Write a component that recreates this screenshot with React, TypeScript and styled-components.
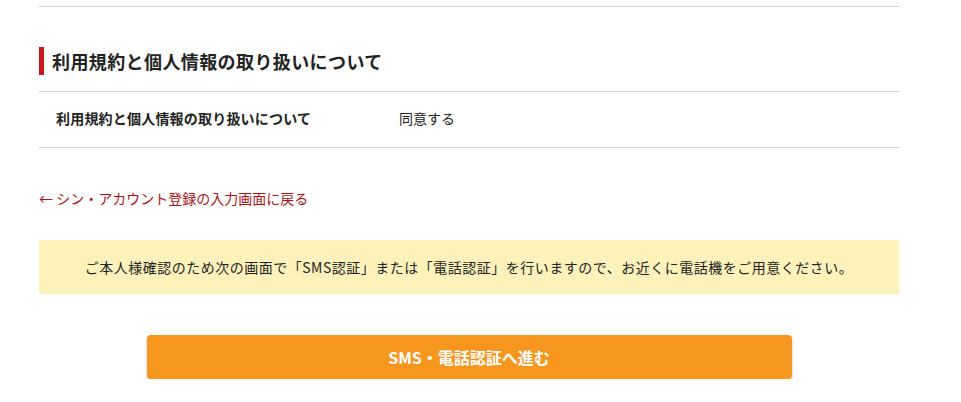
import React from "react";
import styled, { createGlobalStyle } from "styled-components";

const Global = createGlobalStyle`
  body {
    margin: 0;
    background: #fff;
    font-family: "Noto Sans CJK JP", "Liberation Sans", sans-serif;
    color: #222;
  }
`;

const Page = styled.div`
  width: 860px;
  margin-left: 39px;
  padding-top: 6px;
`;

const TopRule = styled.div`
  border-top: 1px solid #d2d2d2;
`;

const Heading = styled.h2`
  margin: 40px 0 0;
  border-left: 5px solid #c8161d;
  padding-left: 8px;
  font-size: 18px;
  font-weight: bold;
  line-height: 28px;
  letter-spacing: 0.4px;
  color: #222;
`;

const Table = styled.div`
  margin-top: 16px;
  border-top: 1px solid #d2d2d2;
`;

const Row = styled.div`
  display: grid;
  grid-template-columns: 343px 1fr;
  align-items: center;
  height: 56px;
  box-sizing: border-box;
  padding: 0 0 3px 17px;
  border-bottom: 1px solid #d2d2d2;
  font-size: 14px;
`;

const Label = styled.div`
  font-weight: bold;
  color: #222;
  letter-spacing: 0.2px;
`;

const Value = styled.div`
  color: #222;
`;

const BackLink = styled.a`
  display: block;
  margin-top: 40px;
  font-size: 14px;
  line-height: 20px;
  color: #a8151b;
  text-decoration: none;
`;

const Notice = styled.div`
  margin-top: 32px;
  height: 54px;
  background: #fff1ba;
  display: flex;
  align-items: center;
  justify-content: center;
  font-size: 14px;
  letter-spacing: 0.5px;
  color: #222;
`;

const Button = styled.button`
  display: block;
  margin: 41px auto 0;
  width: 645px;
  height: 44px;
  border: none;
  border-radius: 4px;
  background: #f7961f;
  box-shadow: 0 2px 3px rgba(0, 0, 0, 0.25);
  color: #fff;
  font-family: "Noto Sans CJK JP", "Liberation Sans", sans-serif;
  font-size: 16px;
  font-weight: bold;
  cursor: pointer;
`;

export default function App() {
  return (
    <>
      <Global />
      <Page>
        <TopRule />
        <Heading>利用規約と個人情報の取り扱いについて</Heading>
        <Table>
          <Row>
            <Label>利用規約と個人情報の取り扱いについて</Label>
            <Value>同意する</Value>
          </Row>
        </Table>
        <BackLink href="#">← シン・アカウント登録の入力画面に戻る</BackLink>
        <Notice>
          ご本人様確認のため次の画面で「SMS認証」または「電話認証」を行いますので、お近くに電話機をご用意ください。
        </Notice>
        <Button>SMS・電話認証へ進む</Button>
      </Page>
    </>
  );
}
